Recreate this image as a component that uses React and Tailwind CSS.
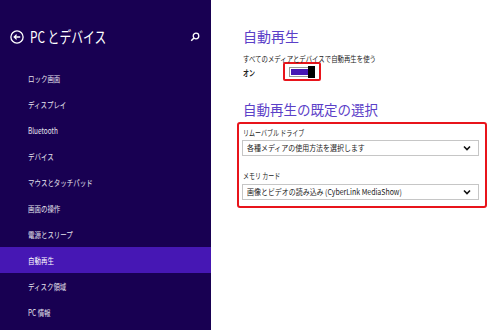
import React from "react";

const items = [
  "ロック画面",
  "ディスプレイ",
  "Bluetooth",
  "デバイス",
  "マウスとタッチパッド",
  "画面の操作",
  "電源とスリープ",
  "自動再生",
  "ディスク領域",
  "PC 情報",
];

function Chevron() {
  return (
    <svg width="8" height="6" viewBox="0 0 8 6">
      <path d="M1 1.5 L4 4.5 L7 1.5" fill="none" stroke="#111" strokeWidth="1.6" />
    </svg>
  );
}

function Select({ text }) {
  return (
    <div className="flex h-[16px] w-[237px] items-center justify-between border border-[#c6c6c6] bg-white pl-[4px] pr-[7px] text-[#222]">
      <span className="block origin-left scale-x-[0.87] whitespace-nowrap text-[8px] leading-none">{text}</span>
      <Chevron />
    </div>
  );
}

export default function App() {
  return (
    <div
      className="flex h-[330px] w-[500px] overflow-hidden bg-white"
      style={{ fontFamily: '"Noto Sans CJK JP", "Noto Sans", sans-serif' }}
    >
      <div className="flex w-[211px] shrink-0 flex-col bg-[#180052] text-[#e6e4ee]">
        <div className="mt-[29px] flex h-[16px] items-center pl-[10px] pr-[11px]">
          <svg width="14" height="14" viewBox="0 0 14 14">
            <circle cx="7" cy="7" r="6.1" fill="none" stroke="#fff" strokeWidth="1.3" />
            <path d="M10.2 7 H4.2 M6.6 4.6 L4.2 7 L6.6 9.4" fill="none" stroke="#fff" strokeWidth="1.3" />
          </svg>
          <span className="ml-[6px] block origin-left scale-x-[0.76] whitespace-nowrap text-[15.5px] leading-none text-white">
            PC とデバイス
          </span>
          <svg className="ml-auto" width="10" height="10" viewBox="0 0 10 10">
            <circle cx="6" cy="4" r="2.8" fill="none" stroke="#fff" strokeWidth="1.3" />
            <path d="M4 6 L1.2 8.8" stroke="#fff" strokeWidth="1.5" />
          </svg>
        </div>
        <div className="mt-[20px] flex flex-col">
          {items.map((t) => (
            <div
              key={t}
              className={
                "flex h-[26px] items-center pl-[28px] " +
                (t === "自動再生" ? "bg-[#4617b4] text-white" : "")
              }
            >
              <span className="block origin-left scale-x-[0.76] whitespace-nowrap text-[8.5px] leading-none">{t}</span>
            </div>
          ))}
        </div>
      </div>
      <div className="flex flex-col pl-[32px] text-[#222]">
        <div className="mt-[28px] text-[14px] leading-[16px] text-[#5b40c8]">自動再生</div>
        <div className="mt-[10px] h-[10px] text-[8px] leading-[10px]">
          <span className="block origin-left scale-x-[0.8] whitespace-nowrap">すべてのメディアとデバイスで自動再生を使う</span>
        </div>
        <div className="-mt-[2px] flex items-center">
          <div className="w-[40px] pt-[3px]">
            <span className="block origin-left scale-x-[0.75] text-[8px] font-bold leading-none">オン</span>
          </div>
          <div className="flex h-[19px] w-[38px] items-center justify-center rounded-[2px] border-2 border-[#e8141b]">
            <div className="relative flex h-[10px] w-[26px] items-center border border-[#9a9a9a] p-[1px]">
              <div className="h-full w-[18px] bg-[#4617b4]" />
              <div className="absolute right-[-1px] top-[-2px] h-[12px] w-[7px] bg-black" />
            </div>
          </div>
        </div>
        <div className="mt-[20px] text-[13.5px] leading-[16px] text-[#5b40c8]">自動再生の既定の選択</div>
        <div className="-ml-[6px] mt-[5px] flex w-[250px] flex-col rounded-[3px] border-2 border-[#e8141b] pb-[6px] pl-[3px] pt-[3px]">
          <div className="h-[12px] pl-[1px] text-[8px] leading-[12px]">
            <span className="block origin-left scale-x-[0.75] whitespace-nowrap">リムーバブル ドライブ</span>
          </div>
          <div className="mt-[1px]">
            <Select text="各種メディアの使用方法を選択します" />
          </div>
          <div className="mt-[14px] h-[12px] pl-[1px] text-[8px] leading-[12px]">
            <span className="block origin-left scale-x-[0.75] whitespace-nowrap">メモリ カード</span>
          </div>
          <div className="mt-[2px]">
            <Select text="画像とビデオの読み込み (CyberLink MediaShow)" />
          </div>
        </div>
      </div>
    </div>
  );
}
